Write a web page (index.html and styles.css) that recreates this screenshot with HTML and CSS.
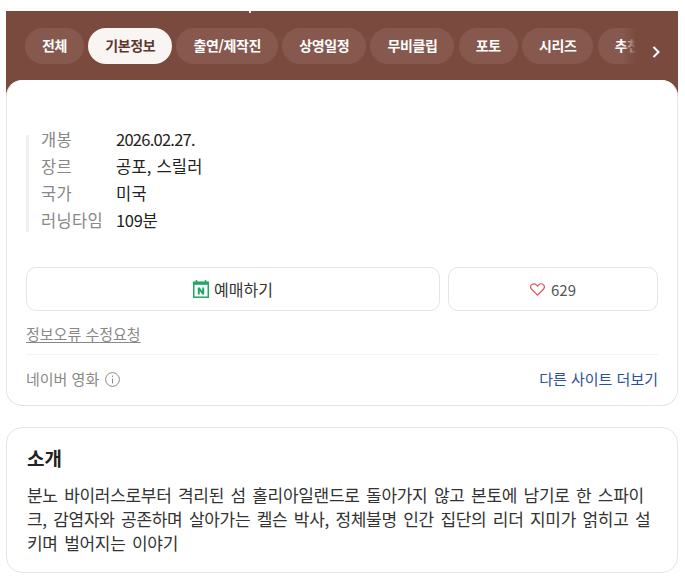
FILE: index.html
```html
<!DOCTYPE html>
<html lang="ko">
<head>
<meta charset="utf-8">
<title>기본정보</title>
<link rel="stylesheet" href="styles.css">
</head>
<body>
<div class="page">
  <nav class="tabs">
    <div class="tab-track">
      <a class="tab">전체</a>
      <a class="tab active">기본정보</a>
      <a class="tab">출연/제작진</a>
      <a class="tab">상영일정</a>
      <a class="tab">무비클립</a>
      <a class="tab">포토</a>
      <a class="tab">시리즈</a>
      <a class="tab">추천</a>
    </div>
    <div class="tab-fade"></div>
    <svg class="tab-next" width="10" height="14" viewBox="0 0 10 14"><path d="M2.500 2l5 5-5 5" fill="none" stroke="#fff" stroke-width="2"/></svg>
  </nav>
  <section class="card info">
    <dl class="facts">
      <div class="fact"><dt>개봉</dt><dd class="date">2026.02.27.</dd></div>
      <div class="fact"><dt>장르</dt><dd>공포, 스릴러</dd></div>
      <div class="fact"><dt>국가</dt><dd>미국</dd></div>
      <div class="fact"><dt>러닝타임</dt><dd class="time">109분</dd></div>
    </dl>
    <div class="actions">
      <a class="btn btn-book">
        <svg width="16" height="18" viewBox="0 0 16 18"><path d="M3.500 0v3M12.500 0v3" stroke="#1fa866" stroke-width="1.500"/><rect x=".75" y="2.200" width="14.500" height="15" fill="#fff" stroke="#1fa866" stroke-width="1.500"/><path d="M1 2.200h14v2.600H1z" fill="#1fa866"/><path d="M4.800 7.500h2l2.400 3.400V7.500h2v7h-2L6.800 11.100v3.400h-2z" fill="#1fa866"/></svg>
        <span>예매하기</span>
      </a>
      <a class="btn btn-like">
        <svg width="15" height="13" viewBox="0 0 15 13"><path d="M7.500 12.200L1.800 6.500C.3 5 .4 3 1.500 1.900 2.800.6 5 .6 6.300 1.900l1.200 1.200 1.200-1.200c1.300-1.300 3.500-1.300 4.800 0 1.100 1.100 1.200 3.100-.3 4.600z" fill="none" stroke="#e4545c" stroke-width="1.200"/></svg>
        <span>629</span>
      </a>
    </div>
    <a class="report">정보오류 수정요청</a>
    <div class="foot">
      <span class="source">네이버 영화
        <svg width="15" height="15" viewBox="0 0 15 15"><circle cx="7.500" cy="7.500" r="6.900" fill="none" stroke="#8a8a8a"/><path d="M7.500 6.500v5M7.500 3.500v1.500" stroke="#8a8a8a"/></svg>
      </span>
      <a class="more">다른 사이트 더보기</a>
    </div>
  </section>
  <section class="card intro">
    <h2>소개</h2>
    <p>분노 바이러스로부터 격리된 섬 홀리아일랜드로 돌아가지 않고 본토에 남기로 한 스파이크, 감염자와 공존하며 살아가는 켈슨 박사, 정체불명 인간 집단의 리더 지미가 얽히고 설키며 벌어지는 이야기</p>
  </section>
</div>
</body>
</html>
```
FILE: styles.css
```css
* { box-sizing: border-box; }
html, body { margin: 0; background: #fff; }
body { font-family: "Noto Sans CJK KR", "Noto Sans", sans-serif; color: #222; }
.page { width: 672px; margin-left: 6px; padding-top: 11px; }
a { color: inherit; text-decoration: none; }

.tabs { position: relative; height: 85px; background: #7a4a3e; overflow: hidden; }
.tabs::before {
  content: ""; position: absolute; left: 243px; top: 0; width: 2px; height: 2px; background: #e9dfdc;
}
.tab-track { display: flex; gap: 4.300px; padding: 17px 0 0 19px; }
.tab {
  flex: none; height: 36px; line-height: 35px; padding: 0 17px; border-radius: 18px;
  background: #87594e; color: #fff; font-size: 14px; font-weight: 700; letter-spacing: -.4px;
}
.tab.active { background: #f8f5f3; color: #5c382f; }
.tab-fade {
  position: absolute; left: 616px; right: 0; top: 17px; height: 36px;
  background: linear-gradient(90deg, rgba(122,74,62,0), #7a4a3e 25%);
}
.tab-next { position: absolute; right: 17px; top: 34px; }

.card { position: relative; background: #fff; border: 1px solid #e4e4e4; border-radius: 16px; }
.info { height: 326px; margin-top: -16px; padding: 45px 19px 0; border-top-color: #fff; }
.facts {
  position: relative; margin: 0; padding-left: 15px;
  display: flex; flex-direction: column; font-size: 16.500px; line-height: 27px;
}
.facts::before {
  content: ""; position: absolute; left: 0; top: 9px; bottom: 2px; width: 3px; background: #f3efef;
}
.fact { display: flex; }
.fact dt { width: 75px; color: #888; letter-spacing: .3px; }
.fact dd { margin: 0; color: #222; letter-spacing: .2px; }
.fact dd.date { letter-spacing: -.75px; }
.fact dd.time { letter-spacing: -.3px; }

.actions { display: flex; gap: 8px; margin-top: 33px; }
.btn {
  display: flex; align-items: center; justify-content: center; gap: 5px;
  height: 44px; border: 1px solid #e4e4e4; border-radius: 10px; font-size: 16px; color: #333;
}
.btn-book { width: 414px; }
.btn-like { width: 210px; gap: 6px; font-size: 15px; color: #555; }
.report {
  display: block; margin-top: 13px; font-size: 15px; line-height: 20px; color: #888;
  text-decoration: underline; text-underline-offset: 2px;
}
.foot {
  display: flex; justify-content: space-between; align-items: center;
  margin-top: 10px; padding-top: 12px; border-top: 1px solid #f3f3f3;
  font-size: 15px; line-height: 24px;
}
.source { display: flex; align-items: center; gap: 6px; color: #888; }
.more { color: #2b5096; }

.intro { height: 146px; margin-top: 21px; padding: 16px 19px 0 20px; }
.intro h2 { margin: 0; font-size: 19px; line-height: 28px; font-weight: 700; color: #222; }
.intro p { margin: 11px 0 0; font-size: 17px; line-height: 24px; letter-spacing: -.3px; word-spacing: 2px; color: #333; }
```
